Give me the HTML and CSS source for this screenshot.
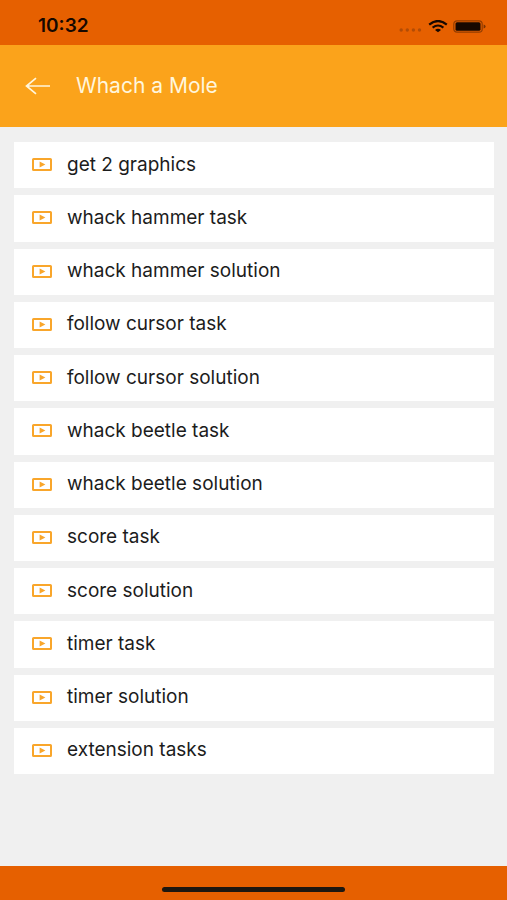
FILE: index.html
```html
<!DOCTYPE html>
<html lang="en">
<head>
<meta charset="utf-8">
<meta name="viewport" content="width=device-width, initial-scale=1">
<title>Whach a Mole</title>
<link rel="stylesheet" href="styles.css">
</head>
<body>
<svg class="sprite" aria-hidden="true">
  <symbol id="video" viewBox="0 0 20 13">
    <rect x="1" y="1" width="18" height="11" rx="0.6" fill="none" stroke="currentColor" stroke-width="2"/>
    <path d="M7.6 3.5v6l5.8-3z" fill="currentColor"/>
  </symbol>
</svg>
<div class="status">
  <span class="time">10:32</span>
  <span class="indicators">
    <svg class="signal" viewBox="0 0 24 4" aria-hidden="true"><circle cx="2.2" cy="2" r="1.7"/><circle cx="8.3" cy="2" r="1.7"/><circle cx="14.4" cy="2" r="1.7"/><circle cx="20.5" cy="2" r="1.7"/></svg>
    <svg class="wifi" viewBox="0 0 20 13" aria-hidden="true">
      <path d="M1.2 4.6Q10-2.6 18.8 4.6" fill="none" stroke="currentColor" stroke-width="2.2"/>
      <path d="M4.6 7.6Q10 3.4 15.4 7.6" fill="none" stroke="currentColor" stroke-width="2.1"/>
      <path d="M7 9.9Q10 7.5 13 9.9L10 12.3z" fill="currentColor"/>
    </svg>
    <svg class="battery" viewBox="0 0 33 13" aria-hidden="true">
      <rect x="0.8" y="0.8" width="28.4" height="11.4" rx="3.2" fill="none" stroke="currentColor" stroke-opacity=".4" stroke-width="1.2"/>
      <rect x="2.5" y="2.2" width="25" height="8.6" rx="1.6" fill="currentColor"/>
      <path d="M30.6 4.6q2 .5 2 1.9t-2 1.9z" fill="currentColor" fill-opacity=".5"/>
    </svg>
  </span>
</div>
<header class="bar">
  <button class="back" type="button" aria-label="Back">
    <svg viewBox="0 0 26 18" aria-hidden="true"><path d="M25 9H1.5M11 1.2L1.5 9l9.5 7.8" fill="none" stroke="currentColor" stroke-width="1.7"/></svg>
  </button>
  <h1 class="title">Whach a Mole</h1>
</header>
<main class="content">
  <ul class="list">
    <li><a class="row" href="#"><svg class="icon" aria-hidden="true"><use href="#video"/></svg>get 2 graphics</a></li>
    <li><a class="row" href="#"><svg class="icon" aria-hidden="true"><use href="#video"/></svg>whack hammer task</a></li>
    <li><a class="row" href="#"><svg class="icon" aria-hidden="true"><use href="#video"/></svg>whack hammer solution</a></li>
    <li><a class="row" href="#"><svg class="icon" aria-hidden="true"><use href="#video"/></svg>follow cursor task</a></li>
    <li><a class="row" href="#"><svg class="icon" aria-hidden="true"><use href="#video"/></svg>follow cursor solution</a></li>
    <li><a class="row" href="#"><svg class="icon" aria-hidden="true"><use href="#video"/></svg>whack beetle task</a></li>
    <li><a class="row" href="#"><svg class="icon" aria-hidden="true"><use href="#video"/></svg>whack beetle solution</a></li>
    <li><a class="row" href="#"><svg class="icon" aria-hidden="true"><use href="#video"/></svg>score task</a></li>
    <li><a class="row" href="#"><svg class="icon" aria-hidden="true"><use href="#video"/></svg>score solution</a></li>
    <li><a class="row" href="#"><svg class="icon" aria-hidden="true"><use href="#video"/></svg>timer task</a></li>
    <li><a class="row" href="#"><svg class="icon" aria-hidden="true"><use href="#video"/></svg>timer solution</a></li>
    <li><a class="row" href="#"><svg class="icon" aria-hidden="true"><use href="#video"/></svg>extension tasks</a></li>
  </ul>
</main>
<footer class="home"><span class="handle"></span></footer>
</body>
</html>
```
FILE: styles.css
```css
* {
  box-sizing: border-box;
}

body {
  margin: 0;
  min-height: 100vh;
  display: flex;
  flex-direction: column;
  background: #f0f0f0;
  color: #1c1c1c;
  font-family: Inter, "Liberation Sans", sans-serif;
}

.sprite {
  display: none;
}

.status {
  display: flex;
  justify-content: space-between;
  align-items: center;
  height: 45px;
  padding: 7px 21px 0 38px;
  background: #e66000;
  color: #160800;
}

.time {
  font-size: 19px;
  line-height: 24px;
  font-weight: 600;
}

.indicators {
  display: flex;
  align-items: center;
  gap: 5px;
}

.signal {
  width: 24px;
  height: 4px;
  margin-top: 8px;
  fill: #b34c05;
}

.wifi {
  width: 20px;
  height: 13px;
}

.battery {
  width: 33px;
  height: 13px;
}

.bar {
  display: flex;
  align-items: center;
  gap: 25px;
  height: 82px;
  padding: 0 25px;
  background: #fba31b;
  color: #fff6dc;
}

.back {
  display: flex;
  padding: 0;
  border: 0;
  background: none;
  color: inherit;
}

.back svg {
  width: 26px;
  height: 18px;
}

.title {
  margin: 0;
  font-size: 21px;
  line-height: 26px;
  font-weight: 400;
}

.content {
  flex: 1;
  display: flex;
  padding: 15px 13px 92px 14px;
}

.list {
  flex: 1;
  display: grid;
  grid-auto-rows: 1fr;
  gap: 7px;
  margin: 0;
  padding: 0;
  list-style: none;
}

.list li {
  display: flex;
}

.row {
  flex: 1;
  display: flex;
  align-items: center;
  gap: 15px;
  padding: 0 18px 1px;
  background: #fff;
  color: inherit;
  font-size: 19px;
  line-height: 24px;
  text-decoration: none;
}

.icon {
  width: 20px;
  height: 13px;
  color: #f9a62b;
}

.home {
  display: flex;
  justify-content: center;
  align-items: flex-end;
  height: 34px;
  padding-bottom: 8px;
  background: #e66000;
}

.handle {
  width: 36%;
  height: 5px;
  border-radius: 3px;
  background: #1d1710;
}
```
